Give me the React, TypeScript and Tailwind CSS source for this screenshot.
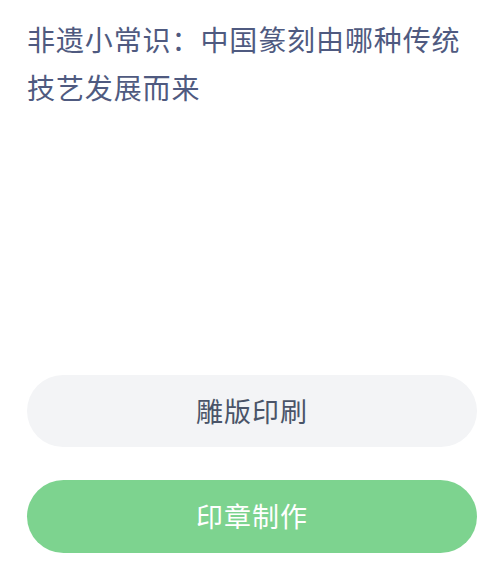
export default function App() {
  return (
    <div
      className="w-[482px] h-[563px] bg-white overflow-hidden"
      style={{ fontFamily: '"Noto Sans CJK SC", "Noto Sans", sans-serif' }}
    >
      {/* Question */}
      <div className="pt-[15px] pl-[27px] pr-[10px]">
        <h1 className="text-[28px] leading-[48px] tracking-[0.9px] font-normal text-[#4f5a80]">
          非遗小常识：中国篆刻由哪种传统技艺发展而来
        </h1>
      </div>

      {/* Answers */}
      <div className="mt-[264px] pl-[27px] pr-[5px] flex flex-col gap-[33px]">
        <button className="h-[72px] w-full rounded-full bg-[#f3f4f6] text-[27px] tracking-[1px] text-[#4a5468]">
          雕版印刷
        </button>
        <button className="h-[73px] w-full rounded-full bg-[#7dd38f] text-[27px] tracking-[1px] text-white">
          印章制作
        </button>
      </div>
    </div>
  )
}
